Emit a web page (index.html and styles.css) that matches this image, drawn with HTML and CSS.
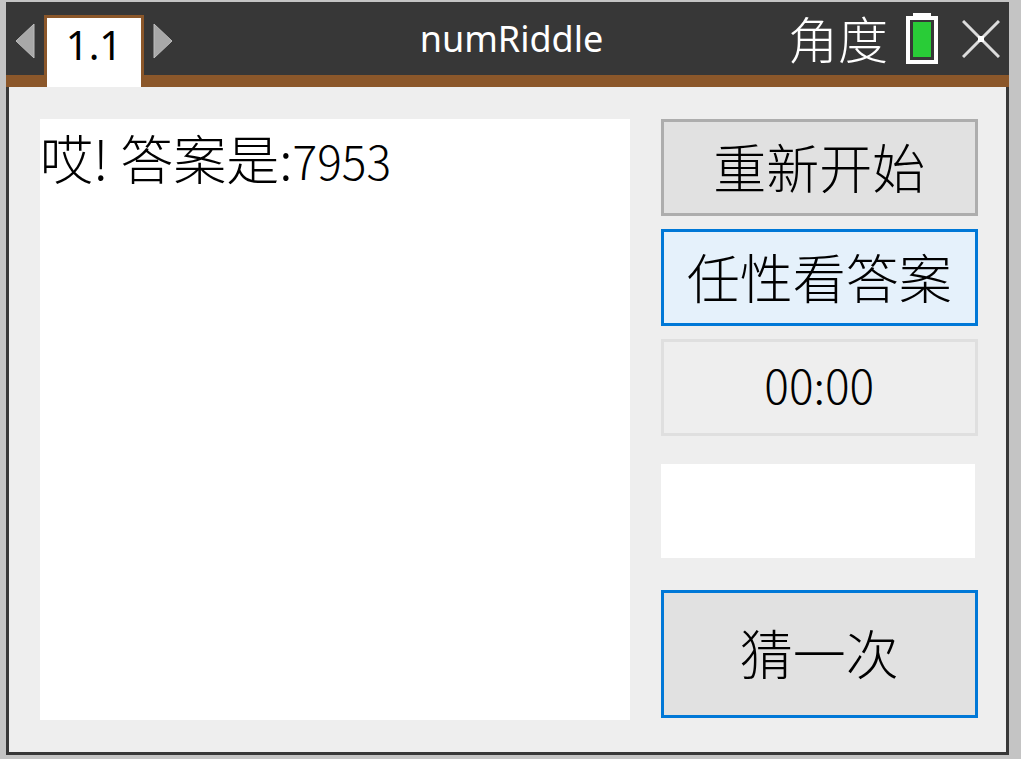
FILE: index.html
```html
<!DOCTYPE html>
<html lang="zh-CN">
<head>
    <meta charset="UTF-8">
    <title>numRiddle</title>
    <meta name="viewport" content="width=device-width, initial-scale=1.0">
    <link rel="stylesheet" href="styles.css">
</head>
<body>

    <div class="window">
        <header class="title-bar">
            <nav class="tabs">
                <button class="icon-button" aria-label="上一页">
                    <svg width="20" height="36" viewBox="0 0 20 36"><path d="M19 1V35L1 18Z" fill="#a8a8a8" stroke="#bdbdbd"/></svg>
                </button>
                <a href="#page" class="tab">1.1</a>
                <button class="icon-button" aria-label="下一页">
                    <svg width="20" height="36" viewBox="0 0 20 36"><path d="M1 1V35L19 18Z" fill="#a8a8a8" stroke="#bdbdbd"/></svg>
                </button>
            </nav>
            <h1>numRiddle</h1>
            <div class="status">
                <span class="angle">角度</span>
                <svg width="32" height="52" viewBox="0 0 32 52">
                    <path d="M7 0H25V3H32V51H0V3H7Z" fill="#fff"/>
                    <path d="M4 7H28V47H4Z" fill="#373737"/>
                    <path d="M7 9H25V44H7Z" fill="#29cc37"/>
                </svg>
                <button class="icon-button close" aria-label="关闭">
                    <svg width="38" height="38" viewBox="0 0 38 38"><path d="M1 1L37 37M37 1L1 37" fill="none" stroke="#dcdcdc" stroke-width="3"/><path d="M16 16H22V22H16Z" fill="#fff"/></svg>
                </button>
            </div>
        </header>

        <main class="page" id="page">
            <div class="output" id="output">哎! 答案是:<span class="number">7953</span></div>

            <div class="controls">
                <button class="control">重新开始</button>
                <button class="control active">任性看答案</button>
                <button class="control timer" disabled>00:00</button>
                <input type="text" class="guess" id="guess" aria-label="输入答案" maxlength="4">
                <button class="control submit">猜一次</button>
            </div>
        </main>
    </div>

</body>
</html>
```
FILE: styles.css
```css
* {
    box-sizing: border-box;
}

body {
    margin: 0;
    padding: 2px 12px 4px 6px;
    min-height: 100vh;
    display: flex;
    background-color: #c4c4c4;
    font-family: "Noto Sans CJK SC", sans-serif;
    font-weight: 300;
    color: #000;
}

button {
    font: inherit;
    color: inherit;
    cursor: pointer;
}

.window {
    flex: 1;
    display: flex;
    flex-direction: column;
    background-color: #eee;
}

/* Title bar */
.title-bar {
    display: grid;
    grid-template-columns: 1fr auto 1fr;
    align-items: center;
    height: 85px;
    padding: 0 9px;
    background-color: #373737;
    border-bottom: 12px solid #8b572a;
    color: #fff;
}

.tabs {
    display: flex;
    align-items: center;
    align-self: end;
    gap: 9px;
    /* the open tab covers the brown line */
    margin-bottom: -12px;
}

.tab {
    width: 100px;
    height: 72px;
    padding-top: 4px;
    border: 3px solid #8b572a;
    border-bottom: 0;
    background-color: #fff;
    color: #000;
    font-family: "Noto Sans", sans-serif;
    font-size: 40px;
    font-weight: 400;
    line-height: 46px;
    text-align: center;
    text-decoration: none;
}

.icon-button {
    display: flex;
    padding: 0;
    border: 0;
    background: none;
}

.tabs .icon-button {
    margin-bottom: 20px;
}

h1 {
    margin: 0;
    padding-left: 8px;
    font-family: "Noto Sans", sans-serif;
    font-size: 36px;
    font-weight: 400;
}

.status {
    display: flex;
    align-items: center;
    justify-content: flex-end;
    gap: 18px;
}

.angle {
    font-size: 50px;
    line-height: 52px;
    padding-bottom: 4px;
}

.close {
    margin-left: 6px;
}

/* Page */
.page {
    flex: 1;
    display: grid;
    grid-template-columns: minmax(0, 13fr) minmax(0, 7fr);
    gap: 31px;
    padding: 32px 28px 32px 31px;
    border: 3px solid #373737;
    border-top: 0;
}

.output {
    background-color: #fff;
    font-size: 53px;
    line-height: 76px;
}

.number {
    font-size: 46px;
}

.controls {
    display: flex;
    flex-direction: column;
}

.control {
    height: 97px;
    margin-bottom: 13px;
    padding: 0 0 4px;
    border: 3px solid #adadad;
    background-color: #e1e1e1;
    font-size: 53px;
    line-height: 60px;
}

.active {
    border-color: #0078d7;
    background-color: #e5f1fb;
}

.timer {
    margin-bottom: 28px;
    padding-bottom: 8px;
    border-color: #dfdfdf;
    background-color: #eee;
    font-size: 46px;
    color: #000;
}

.guess {
    min-width: 0;
    height: 94px;
    margin: 0 3px 32px 0;
    padding: 0 8px;
    border: 0;
    background-color: #fff;
    font: inherit;
    font-size: 46px;
}

.submit {
    height: 128px;
    margin-bottom: 0;
    border-color: #0078d7;
}
```
